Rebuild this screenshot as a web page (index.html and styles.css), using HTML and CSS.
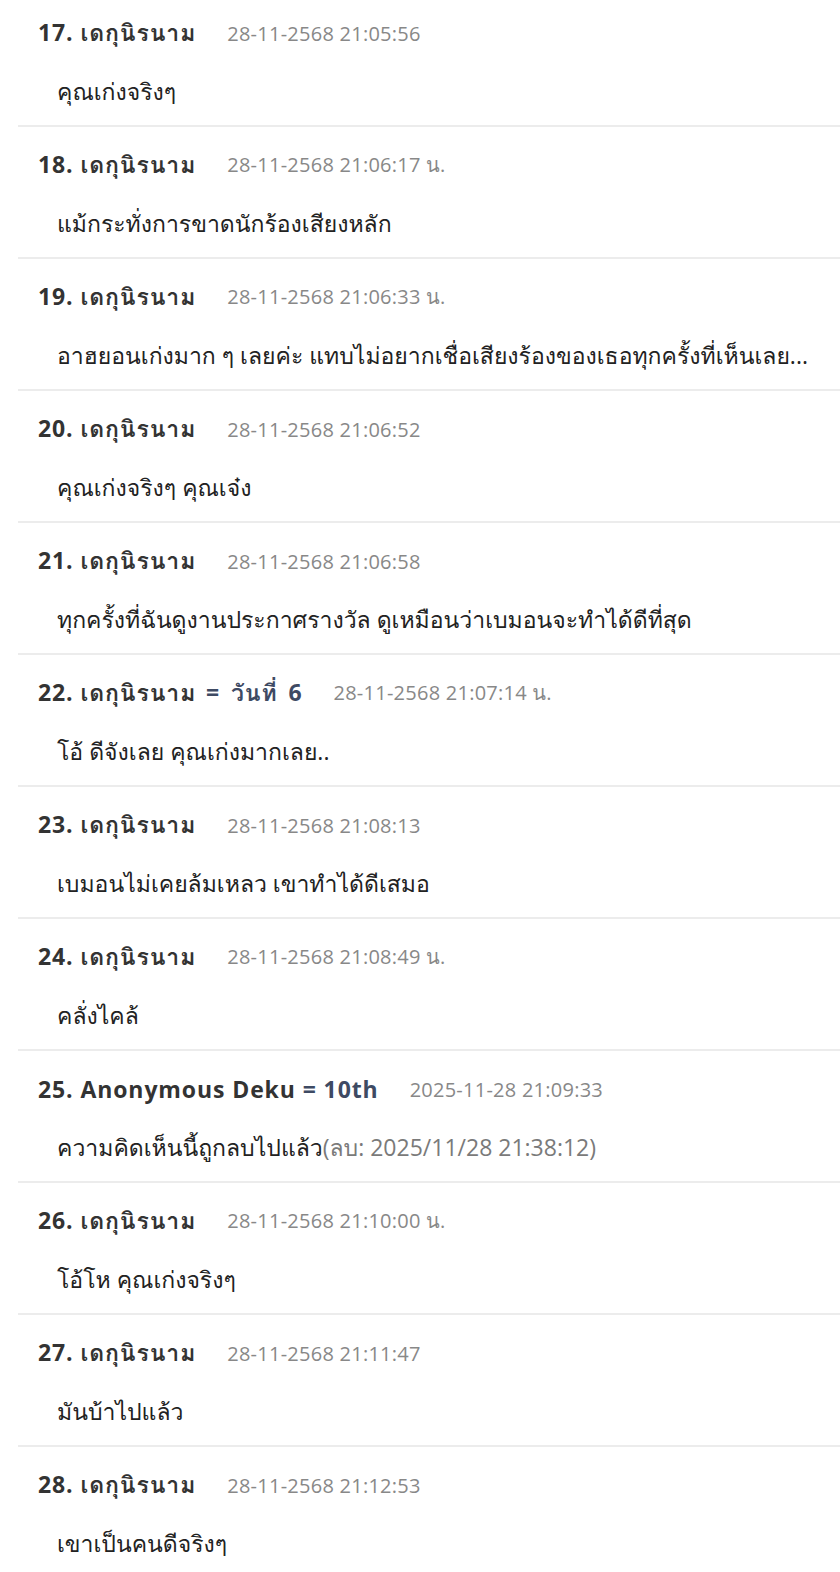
FILE: index.html
```html
<!DOCTYPE html>
<html lang="th">
<head>
<meta charset="utf-8">
<title>Comments</title>
<link rel="stylesheet" href="styles.css">
</head>
<body>
<ul class="comments">
  <li class="comment">
    <div class="head"><span class="name">17. เดกุนิรนาม</span><span class="date">28-11-2568 21:05:56</span></div>
    <div class="body">คุณเก่งจริงๆ</div>
  </li>
  <li class="comment">
    <div class="head"><span class="name">18. เดกุนิรนาม</span><span class="date">28-11-2568 21:06:17 น.</span></div>
    <div class="body">แม้กระทั่งการขาดนักร้องเสียงหลัก</div>
  </li>
  <li class="comment">
    <div class="head"><span class="name">19. เดกุนิรนาม</span><span class="date">28-11-2568 21:06:33 น.</span></div>
    <div class="body">อาฮยอนเก่งมาก ๆ เลยค่ะ แทบไม่อยากเชื่อเสียงร้องของเธอทุกครั้งที่เห็นเลย...</div>
  </li>
  <li class="comment">
    <div class="head"><span class="name">20. เดกุนิรนาม</span><span class="date">28-11-2568 21:06:52</span></div>
    <div class="body">คุณเก่งจริงๆ คุณเจ๋ง</div>
  </li>
  <li class="comment">
    <div class="head"><span class="name">21. เดกุนิรนาม</span><span class="date">28-11-2568 21:06:58</span></div>
    <div class="body">ทุกครั้งที่ฉันดูงานประกาศรางวัล ดูเหมือนว่าเบมอนจะทำได้ดีที่สุด</div>
  </li>
  <li class="comment">
    <div class="head"><span class="name">22. เดกุนิรนาม <span class="rank rank-th">= วันที่ 6</span></span><span class="date">28-11-2568 21:07:14 น.</span></div>
    <div class="body">โอ้ ดีจังเลย คุณเก่งมากเลย..</div>
  </li>
  <li class="comment">
    <div class="head"><span class="name">23. เดกุนิรนาม</span><span class="date">28-11-2568 21:08:13</span></div>
    <div class="body">เบมอนไม่เคยล้มเหลว เขาทำได้ดีเสมอ</div>
  </li>
  <li class="comment">
    <div class="head"><span class="name">24. เดกุนิรนาม</span><span class="date">28-11-2568 21:08:49 น.</span></div>
    <div class="body">คลั่งไคล้</div>
  </li>
  <li class="comment">
    <div class="head"><span class="name">25. Anonymous Deku <span class="rank">= 10th</span></span><span class="date">2025-11-28 21:09:33</span></div>
    <div class="body">ความคิดเห็นนี้ถูกลบไปแล้ว<span class="deleted">(ลบ: 2025/11/28 21:38:12)</span></div>
  </li>
  <li class="comment">
    <div class="head"><span class="name">26. เดกุนิรนาม</span><span class="date">28-11-2568 21:10:00 น.</span></div>
    <div class="body">โอ้โห คุณเก่งจริงๆ</div>
  </li>
  <li class="comment">
    <div class="head"><span class="name">27. เดกุนิรนาม</span><span class="date">28-11-2568 21:11:47</span></div>
    <div class="body">มันบ้าไปแล้ว</div>
  </li>
  <li class="comment">
    <div class="head"><span class="name">28. เดกุนิรนาม</span><span class="date">28-11-2568 21:12:53</span></div>
    <div class="body">เขาเป็นคนดีจริงๆ</div>
  </li>
</ul>
</body>
</html>
```

FILE: styles.css
```css
html, body {
  margin: 0;
  padding: 0;
  background: #ffffff;
}
body {
  font-family: "Open Sans", "Loma", "Noto Sans Thai Looped", sans-serif;
  color: #222;
  overflow: hidden;
}
.comments {
  list-style: none;
  margin: -5px 0 0 18px;
  padding: 0;
}
.comment {
  padding: 23px 0 19px 20px;
  border-bottom: 2px solid #ececec;
  height: 88px;
}
.head {
  display: flex;
  align-items: center;
  gap: 31px;
  height: 30px;
  white-space: nowrap;
}
.name {
  font-size: 23px;
  font-weight: 700;
  letter-spacing: 0.9px;
  color: #333333;
}
.rank {
  color: #3e4a63;
}
.rank-th {
  word-spacing: 4px;
  margin-left: 3px;
}
.date {
  font-size: 20px;
  letter-spacing: 0.25px;
  color: #888888;
}
.body {
  margin-top: 28px;
  padding-left: 19px;
  padding-right: 14px;
  font-size: 23px;
  line-height: 30px;
  color: #222222;
  white-space: nowrap;
  overflow: hidden;
  text-overflow: ellipsis;
}
.deleted {
  color: #7a7a7a;
}
```
